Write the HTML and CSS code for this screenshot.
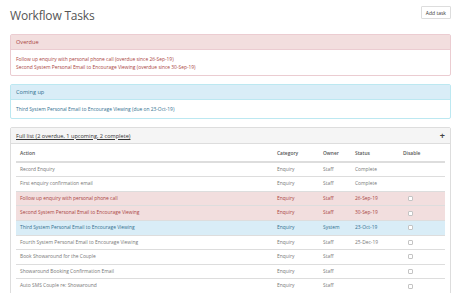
FILE: index.html
```html
<!DOCTYPE html>
<html lang="en">
<head>
  <meta charset="UTF-8" />
  <title>Workflow Tasks</title>
  <link rel="stylesheet" href="styles.css">
</head>
<body>
  <div class="page">
    <div class="top">
      <h1>Workflow Tasks</h1>
      <button class="btn">Add task</button>
    </div>

    <div class="panel panel-danger">
      <div class="panel-heading">Overdue</div>
      <div class="panel-body">
        <div>Follow up enquiry with personal phone call (overdue since 26-Sep-19)</div>
        <div>Second System Personal Email to Encourage Viewing (overdue since 30-Sep-19)</div>
      </div>
    </div>

    <div class="panel panel-info">
      <div class="panel-heading">Coming up</div>
      <div class="panel-body">
        <div>Third System Personal Email to Encourage Viewing (due on 23-Oct-19)</div>
      </div>
    </div>

    <div class="panel panel-default">
      <div class="panel-heading">
        <a href="#">Full list (2 overdue, 1 upcoming, 2 complete)</a>
        <span class="plus">+</span>
      </div>
      <div class="panel-body">
        <table>
          <colgroup><col><col class="c-cat"><col class="c-owner"><col class="c-status"><col class="c-dis"></colgroup>
          <thead>
            <tr><th>Action</th><th>Category</th><th>Owner</th><th>Status</th><th>Disable</th></tr>
          </thead>
          <tbody>
            <tr><td>Record Enquiry</td><td>Enquiry</td><td>Staff</td><td>Complete</td><td></td></tr>
            <tr><td>First enquiry confirmation email</td><td>Enquiry</td><td>Staff</td><td>Complete</td><td></td></tr>
            <tr class="danger"><td>Follow up enquiry with personal phone call</td><td>Enquiry</td><td>Staff</td><td>26-Sep-19</td><td><span class="check"></span></td></tr>
            <tr class="danger"><td>Second System Personal Email to Encourage Viewing</td><td>Enquiry</td><td>Staff</td><td>30-Sep-19</td><td><span class="check"></span></td></tr>
            <tr class="info"><td>Third System Personal Email to Encourage Viewing</td><td>Enquiry</td><td>System</td><td>23-Oct-19</td><td><span class="check"></span></td></tr>
            <tr><td>Fourth System Personal Email to Encourage Viewing</td><td>Enquiry</td><td>Staff</td><td>25-Dec-19</td><td><span class="check"></span></td></tr>
            <tr><td>Book Showaround for the Couple</td><td>Enquiry</td><td>Staff</td><td></td><td><span class="check"></span></td></tr>
            <tr><td>Showaround Booking Confirmation Email</td><td>Enquiry</td><td>Staff</td><td></td><td><span class="check"></span></td></tr>
            <tr><td>Auto SMS Couple re: Showaround</td><td>Enquiry</td><td>Staff</td><td></td><td><span class="check"></span></td></tr>
          </tbody>
        </table>
      </div>
    </div>
  </div>
</body>
</html>
```

FILE: styles.css
```css
* { box-sizing: border-box; }
body { margin: 0; background: #fff; font-family: "Open Sans", "Noto Sans", sans-serif; font-size: 4.9px; color: #777; }
.page { padding: 6px 23px 0 10px; }

.top { display: flex; justify-content: space-between; align-items: flex-start; height: 28px; }
h1 { margin: 0; padding-top: 2px; font-size: 12px; line-height: 16px; font-weight: 400; color: #555; letter-spacing: -0.2px; }
.btn { height: 13px; padding: 0 4px; font: inherit; font-size: 5px; color: #333; background: #fff; border: 1px solid #ddd; border-radius: 1px; }

.panel { border: 1px solid #ddd; border-radius: 2px; margin-bottom: 8px; }
.panel-heading { display: flex; justify-content: space-between; align-items: center; height: 15px; padding: 0 5px; font-size: 5.6px; border-bottom: 1px solid transparent; }
.panel-body { padding: 5px; line-height: 8px; }

.panel-danger { border-color: #ebccd1; }
.panel-danger .panel-heading { background: #f2dede; color: #a94442; border-color: #ebccd1; }
.panel-danger .panel-body { color: #a94442; padding: 5px 5px 4px; }

.panel-info { border-color: #bce8f1; }
.panel-info .panel-heading { background: #d9edf7; color: #31708f; border-color: #bce8f1; }
.panel-info .panel-body { color: #31708f; padding: 5px 5px 5px; }

.panel-default .panel-heading { background: #f5f5f5; color: #333; border-color: #ddd; height: 16px; }
.panel-default .panel-heading a { color: #333; }
.panel-default .panel-body { padding-top: 3px; }
.plus { font-size: 9px; font-weight: 700; color: #444; }

table { width: 100%; border-collapse: collapse; table-layout: fixed; }
.c-cat { width: 46px; }
.c-owner { width: 32px; }
.c-status { width: 48px; }
.c-dis { width: 46px; }
th, td { text-align: left; padding: 3px 4px; line-height: 7.6px; border-top: 1px solid #ddd; white-space: nowrap; overflow: hidden; }
th { color: #555; font-weight: 600; border-top: 0; border-bottom: 2px solid #ddd; }
td:last-child { padding-left: 9px; }
tr.danger td { background: #f2dede; color: #a94442; }
tr.info td { background: #d9edf7; color: #31708f; }
.check { display: inline-block; width: 5px; height: 5px; border: 1px solid #c4c4c4; border-radius: 1px; background: #fff; vertical-align: middle; }
```
